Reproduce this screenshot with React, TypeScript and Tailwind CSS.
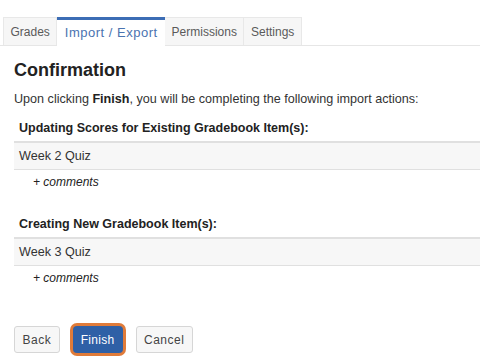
import React from "react";

const tabs = ["Grades", "Import / Export", "Permissions", "Settings"];

function ItemBlock({ title, item }: { title: string; item: string }) {
  return (
    <div>
      <h3 className="px-[5px] text-[12.5px] font-bold leading-[18px] text-[#222]">{title}</h3>
      <div className="mt-[4px] border-t-[2px] border-b border-[#e0e0e0] bg-[#f7f7f7] px-[5px] py-[5px] text-[12.6px] leading-[16px] text-[#333]">
        {item}
      </div>
      <div className="pl-[19px] pt-[4px] text-[12px] italic leading-[16px] text-[#222]">+ comments</div>
    </div>
  );
}

export default function App() {
  return (
    <div
      className="h-[358px] w-[480px] overflow-hidden bg-white text-[#333]"
      style={{ fontFamily: '"Liberation Sans", Arial, sans-serif' }}
    >
      {/* tab strip */}
      <div className="mt-[17px] flex border-b border-[#e6e6e6] pl-[3px]">
        {tabs.map((t, i) =>
          i === 1 ? (
            <div
              key={t}
              className="-mb-px flex h-[29px] items-center border-t-[3px] border-[#3c6db5] bg-white px-[7.5px] text-[13px] tracking-[0.5px] text-[#4a73b0]"
            >
              {t}
            </div>
          ) : (
            <div
              key={t}
              className="flex h-[28px] items-center border-t border-r border-[#e8e8e8] bg-[#f6f6f6] px-[6.5px] text-[12px] text-[#5a5a5a] first:border-l"
            >
              {t}
            </div>
          )
        )}
      </div>

      <div className="px-[14px]">
        <h2 className="mt-[13px] text-[18px] font-bold leading-[22px] text-[#222]">Confirmation</h2>
        <p className="mt-[10px] text-[12.6px] leading-[16px] text-[#333]">
          Upon clicking <b className="text-[#222]">Finish</b>, you will be completing the following import actions:
        </p>

        <div className="mt-[12px] -mr-[14px]">
          <ItemBlock title="Updating Scores for Existing Gradebook Item(s):" item="Week 2 Quiz" />
        </div>
        <div className="mt-[25px] -mr-[14px]">
          <ItemBlock title="Creating New Gradebook Item(s):" item="Week 3 Quiz" />
        </div>

        <div className="mt-[40px] flex items-center gap-[13px]">
          <button className="h-[27px] rounded-[3px] border border-[#d6d6d6] bg-[#f7f7f7] px-[7.5px] text-[12px] tracking-[0.5px] text-[#444]">
            Back
          </button>
          <button className="h-[27px] rounded-[4px] bg-[#2f60a6] px-[8px] text-[12px] tracking-[0.3px] text-white shadow-[0_0_0_3px_#e07b39]">
            Finish
          </button>
          <button className="h-[27px] rounded-[3px] border border-[#d6d6d6] bg-[#f7f7f7] px-[7.5px] text-[12px] tracking-[0.5px] text-[#444]">
            Cancel
          </button>
        </div>
      </div>
    </div>
  );
}
